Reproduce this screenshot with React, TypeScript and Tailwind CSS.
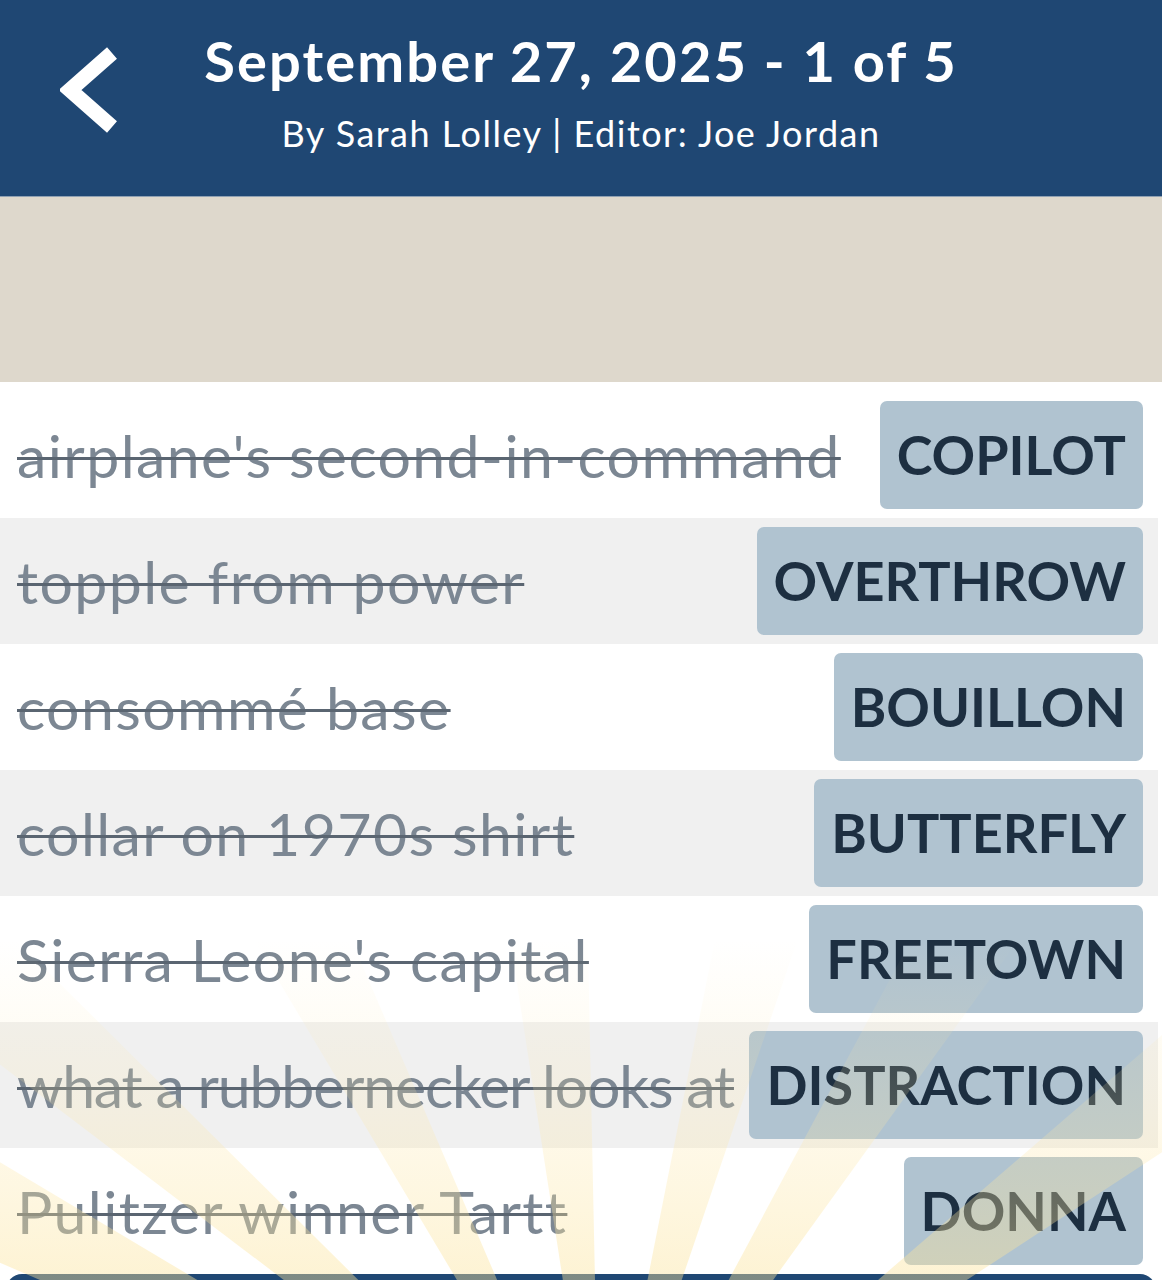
const clues = [
  { clue: "airplane's second-in-command", answer: "COPILOT", track: "tracking-[1.4px]" },
  { clue: "topple from power", answer: "OVERTHROW", track: "tracking-[1.4px]" },
  { clue: "consommé base", answer: "BOUILLON", track: "tracking-[1.4px]" },
  { clue: "collar on 1970s shirt", answer: "BUTTERFLY", track: "tracking-[1.4px]" },
  { clue: "Sierra Leone's capital", answer: "FREETOWN", track: "tracking-[1.4px]" },
  { clue: "what a rubbernecker looks at", answer: "DISTRACTION", track: "tracking-[-1.2px]" },
  { clue: "Pulitzer winner Tartt", answer: "DONNA", track: "tracking-[1.4px]" },
];

// sunburst wedges, angle in degrees from straight up
const rays = [-63, -49, -27, -5, 15, 32, 53];
const cx = 600;
const cy = 1520;

function rayPoints(a: number) {
  const w = 3.8;
  const r = 900;
  const p = (deg: number) => {
    const rad = (deg * Math.PI) / 180;
    return `${cx + Math.sin(rad) * r},${cy - Math.cos(rad) * r}`;
  };
  return `${cx},${cy} ${p(a - w)} ${p(a + w)}`;
}

function ChevronLeft() {
  return (
    <svg width="60" height="90" viewBox="0 0 60 90" fill="none">
      <polyline
        points="52,8 10,45 52,82"
        stroke="white"
        strokeWidth="15"
        strokeLinejoin="miter"
      />
    </svg>
  );
}

export default function App() {
  return (
    <div
      className="relative w-full overflow-hidden bg-white"
      style={{ fontFamily: "Lato, 'Noto Sans', sans-serif" }}
    >
      <header className="grid h-[196px] grid-cols-[1fr_auto_1fr] items-start bg-[#1f4773] text-white">
        <div className="pl-[60px] pt-[45px]">
          <ChevronLeft />
        </div>
        <div className="flex flex-col items-center pt-[28px]">
          <h1 className="text-[56px] font-bold leading-[66px] tracking-[2.1px]">
            September 27, 2025 - 1 of 5
          </h1>
          <p className="mt-[17px] text-[36px] leading-[44px] tracking-[1.5px]">
            By Sarah Lolley | Editor: Joe Jordan
          </p>
        </div>
        <div />
      </header>

      <div className="h-[186px] border-t border-[#8fa1b3] bg-[#ded8cc]" />

      <div className="pt-[10px]">
        {clues.map((c, i) => (
          <div
            key={c.answer}
            className={`mr-[4px] flex h-[126px] items-center justify-between gap-[10px] pl-[17px] pr-[15px] ${
              i % 2 === 1 ? "bg-[#f0f0f0]" : "bg-white"
            }`}
          >
            <span
              className={`min-w-0 whitespace-nowrap text-[59px] leading-none text-[#7c8793] line-through decoration-3 decoration-[#5a6571] ${c.track}`}
            >
              {c.clue}
            </span>
            <span className="flex h-[108px] shrink-0 items-center rounded-[7px] bg-[#b0c3d0] px-[17px] text-[54px] font-bold leading-none text-[#1d2f41]">
              {c.answer}
            </span>
          </div>
        ))}
      </div>

      <div className="mx-[6px] h-[60px] rounded-t-[16px] bg-[#1f4773]" />

      <svg
        className="pointer-events-none absolute left-0 top-[880px]"
        width="1162"
        height="420"
        viewBox="0 880 1162 420"
      >
        <defs>
          <linearGradient id="fade" x1="0" y1="940" x2="0" y2="1290" gradientUnits="userSpaceOnUse">
            <stop offset="0" stopColor="#fde7a6" stopOpacity="0" />
            <stop offset="0.5" stopColor="#fde7a6" stopOpacity="0.22" />
            <stop offset="1" stopColor="#fbe39a" stopOpacity="0.45" />
          </linearGradient>
        </defs>
        {rays.map((a) => (
          <polygon key={a} points={rayPoints(a)} fill="url(#fade)" />
        ))}
      </svg>
    </div>
  );
}
